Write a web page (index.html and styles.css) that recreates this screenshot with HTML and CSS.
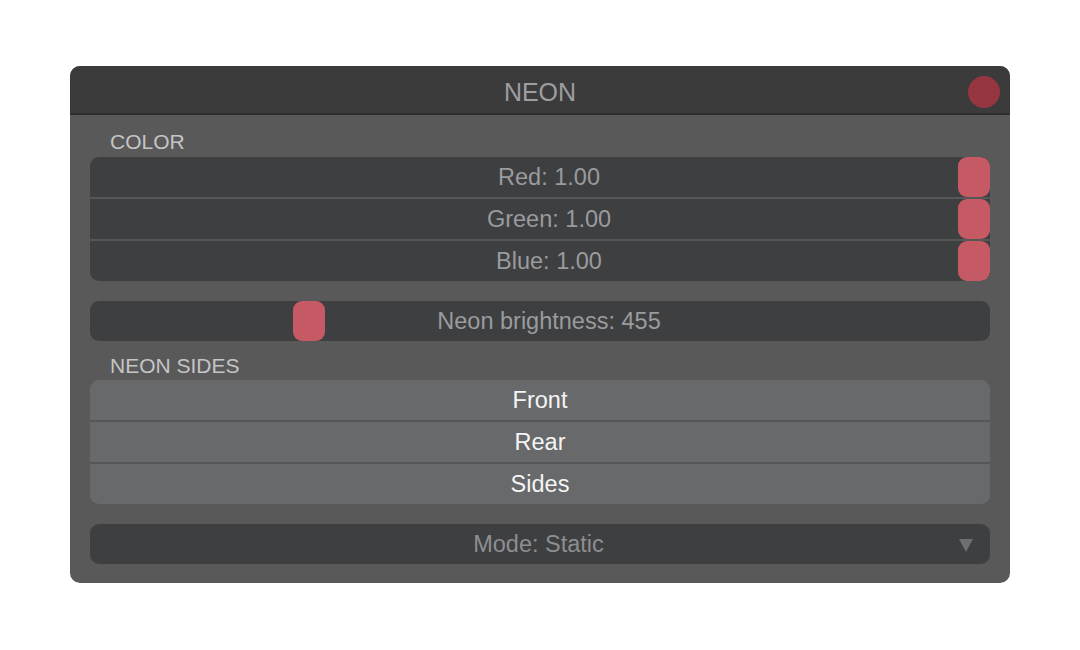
FILE: index.html
```html
<!DOCTYPE html>
<html>
<head>
<meta charset="utf-8">
<link rel="stylesheet" href="styles.css">
</head>
<body>
<div class="panel">
  <div class="header">
    <span class="title">NEON</span>
    <span class="close"></span>
  </div>
  <div class="body">
    <div class="label first">COLOR</div>
    <div class="group dark">
      <div class="row slider"><span>Red: 1.00</span><span class="thumb" style="left: calc(100% - 32px)"></span></div>
      <div class="row slider"><span>Green: 1.00</span><span class="thumb" style="left: calc(100% - 32px)"></span></div>
      <div class="row slider"><span>Blue: 1.00</span><span class="thumb" style="left: calc(100% - 32px)"></span></div>
    </div>
    <div class="group dark single">
      <div class="row slider"><span>Neon brightness: 455</span><span class="thumb" style="left: 203px"></span></div>
    </div>
    <div class="label sides">NEON SIDES</div>
    <div class="group light">
      <div class="row button">Front</div>
      <div class="row button">Rear</div>
      <div class="row button">Sides</div>
    </div>
    <div class="group dark single mode">
      <div class="row"><span>Mode: Static</span>
        <svg class="arrow" width="14" height="14" viewBox="0 0 14 14"><polygon points="0,1 14,1 7,14" fill="#6e6f71"/></svg>
      </div>
    </div>
  </div>
</div>
</body>
</html>
```

FILE: styles.css
```css
* { box-sizing: border-box; }
html, body { margin: 0; padding: 0; background: #ffffff; }
body {
  font-family: "Liberation Sans", Arial, sans-serif;
  width: 1080px;
  height: 650px;
  padding: 66px 70px 0 70px;
}
.panel {
  width: 940px;
  height: 517px;
  background: #595959;
  border-radius: 10px;
  overflow: hidden;
}
.header {
  position: relative;
  height: 49px;
  background: #3b3b3b;
  border-bottom: 2px solid #2e2e2e;
  display: flex;
  align-items: center;
  justify-content: center;
}
.title {
  color: #9d9ea2;
  font-size: 25px;
  padding-top: 6px;
}
.close {
  position: absolute;
  right: 10px;
  top: 10px;
  width: 32px;
  height: 32px;
  border-radius: 50%;
  background: #963641;
}
.body {
  padding: 14px 20px 0 20px;
  display: flex;
  flex-direction: column;
}
.label {
  color: #c4c5c7;
  font-size: 21px;
  padding-left: 20px;
  height: 26px;
  line-height: 26px;
}
.label.first { margin-bottom: 2px; }
.label.sides { margin-top: 12px; margin-bottom: 1px; }
.group {
  border-radius: 9px;
  overflow: hidden;
  display: flex;
  flex-direction: column;
}
.group.dark { background: #3e3f41; }
.group.light { background: #68696b; }
.row {
  position: relative;
  height: 42px;
  display: flex;
  align-items: center;
  justify-content: center;
  font-size: 23.5px;
  padding-top: 1px;
  border-bottom: 2px solid #555657;
}
.row:last-child { border-bottom: none; height: 40px; }
.slider { padding-left: 18px; }
.slider span:first-child { color: #9a9b9d; }
.thumb {
  position: absolute;
  top: 0;
  width: 32px;
  height: 40px;
  border-radius: 9px;
  background: #c65a64;
}
.group.single { margin-top: 20px; }
.button { color: #f4f4f4; }
.group.light + .group.mode { margin-top: 20px; }
.mode .row { padding-left: 0; padding-right: 3px; }
.mode .row span { color: #8d8e90; }
.arrow {
  position: absolute;
  right: 17px;
  top: 14px;
}
```
